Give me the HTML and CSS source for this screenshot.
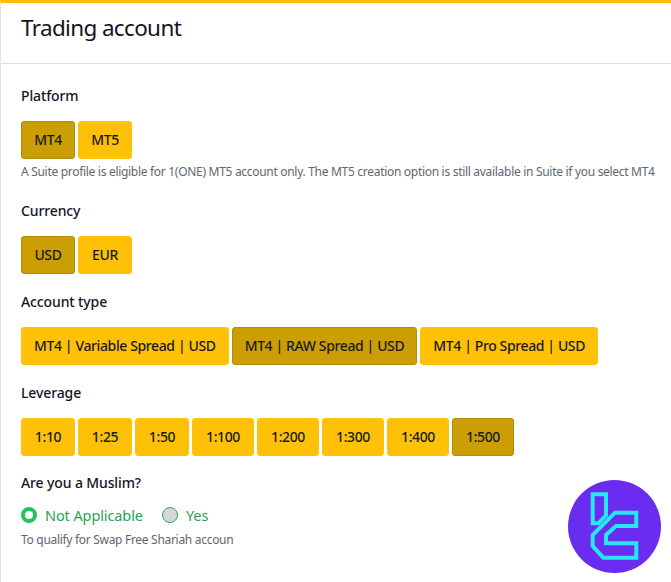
FILE: index.html
```html
<!DOCTYPE html>
<html lang="en">
<head>
<meta charset="utf-8">
<title>Trading account</title>
<link rel="stylesheet" href="styles.css">
</head>
<body>
<main class="card">
  <header class="card-head"><h1>Trading account</h1></header>
  <section class="field field-platform">
    <h2>Platform</h2>
    <div class="options"><button class="opt on">MT4</button><button class="opt">MT5</button></div>
    <p class="hint">A Suite profile is eligible for 1(ONE) MT5 account only. The MT5 creation option is still available in Suite if you select MT4</p>
  </section>
  <section class="field field-currency">
    <h2>Currency</h2>
    <div class="options"><button class="opt on">USD</button><button class="opt">EUR</button></div>
  </section>
  <section class="field field-type">
    <h2>Account type</h2>
    <div class="options"><button class="opt wide">MT4 | Variable Spread | USD</button><button class="opt wide on">MT4 | RAW Spread | USD</button><button class="opt wide">MT4 | Pro Spread | USD</button></div>
  </section>
  <section class="field field-leverage">
    <h2>Leverage</h2>
    <div class="options"><button class="opt lev">1:10</button><button class="opt lev">1:25</button><button class="opt lev">1:50</button><button class="opt lev big">1:100</button><button class="opt lev big">1:200</button><button class="opt lev big">1:300</button><button class="opt lev big">1:400</button><button class="opt lev big on">1:500</button></div>
  </section>
  <section class="field field-muslim">
    <h2>Are you a Muslim?</h2>
    <div class="radios">
      <label class="radio"><span class="dot checked"></span>Not Applicable</label>
      <label class="radio"><span class="dot"></span>Yes</label>
    </div>
    <p class="hint">To qualify for Swap Free Shariah accoun</p>
  </section>
</main>
<svg class="badge" viewBox="0 0 93 93" aria-hidden="true">
  <circle cx="46.500" cy="46.500" r="46.500" fill="#6a2cf0"/>
  <path class="logo" d="M24.700 14.300H38V35.500L30.500 43.300H24.700Z"/>
  <path class="logo" d="M68.300 32.700V46H48L38 55V63.300H68.300V77.700H35.300L24.700 66V55L47 32.700Z"/>
</svg>
</body>
</html>
```
FILE: styles.css
```css
* { box-sizing: border-box; }
html, body { margin: 0; height: 100%; }
body {
  position: relative;
  width: 671px;
  height: 582px;
  overflow: hidden;
  background: #fff;
  font-family: "Noto Sans", sans-serif;
  color: #14141f;
}
.card {
  height: 582px;
  border-top: 3px solid #fdc00a;
  border-left: 1px solid #e4e4e4;
}
.card-head {
  height: 61px;
  padding: 10px 0 0 20px;
  border-bottom: 1px solid #dcdfe1;
}
h1 {
  margin: 0;
  font-size: 22.500px;
  line-height: 30px;
  font-weight: 400;
  letter-spacing: -0.65px;
}
.field { padding-left: 20px; }
.field-platform { padding-top: 22px; }
.field-currency { padding-top: 20px; }
.field-type { padding-top: 18px; }
.field-leverage { padding-top: 18px; }
.field-muslim { padding-top: 17px; }
h2 {
  margin: 0 0 15px;
  font-size: 14px;
  line-height: 20px;
  font-weight: 500;
  letter-spacing: -0.12px;
}
.field-muslim h2 { margin-bottom: 10px; }
.options { display: flex; gap: 3px; }
.opt {
  height: 38px;
  width: 54px;
  padding: 0;
  border: 1px solid #fcc30c;
  border-radius: 3px;
  background: #fec107;
  color: #1a1a1a;
  font: 500 14px/36px "Noto Sans", sans-serif;
  letter-spacing: -0.38px;
  white-space: nowrap;
}
.opt.on {
  background: #cc9e06;
  border-color: #b38c08;
}
.wide { width: auto; padding: 0 12px; }
.lev { width: 54px; }
.lev.big { width: 62px; }
.hint {
  margin: 4px 0 0;
  font-size: 12px;
  line-height: 18px;
  letter-spacing: -0.3px;
  color: #5f6670;
  white-space: nowrap;
}
.radios { display: flex; gap: 19px; }
.radio {
  display: flex;
  align-items: center;
  gap: 8px;
  font-size: 14.500px;
  line-height: 24px;
  letter-spacing: -0.1px;
  color: #2c9f55;
}
.dot {
  width: 16px;
  height: 16px;
  border-radius: 50%;
  border: 1px solid #2fa65a;
  background: #d3d7da;
}
.dot.checked {
  border: 4.500px solid #27c25f;
  background: #fff;
}
.badge {
  position: absolute;
  left: 568px;
  top: 480px;
  width: 93px;
  height: 93px;
}
.logo {
  fill: none;
  stroke: #27e6f5;
  stroke-width: 4px;
}
```
